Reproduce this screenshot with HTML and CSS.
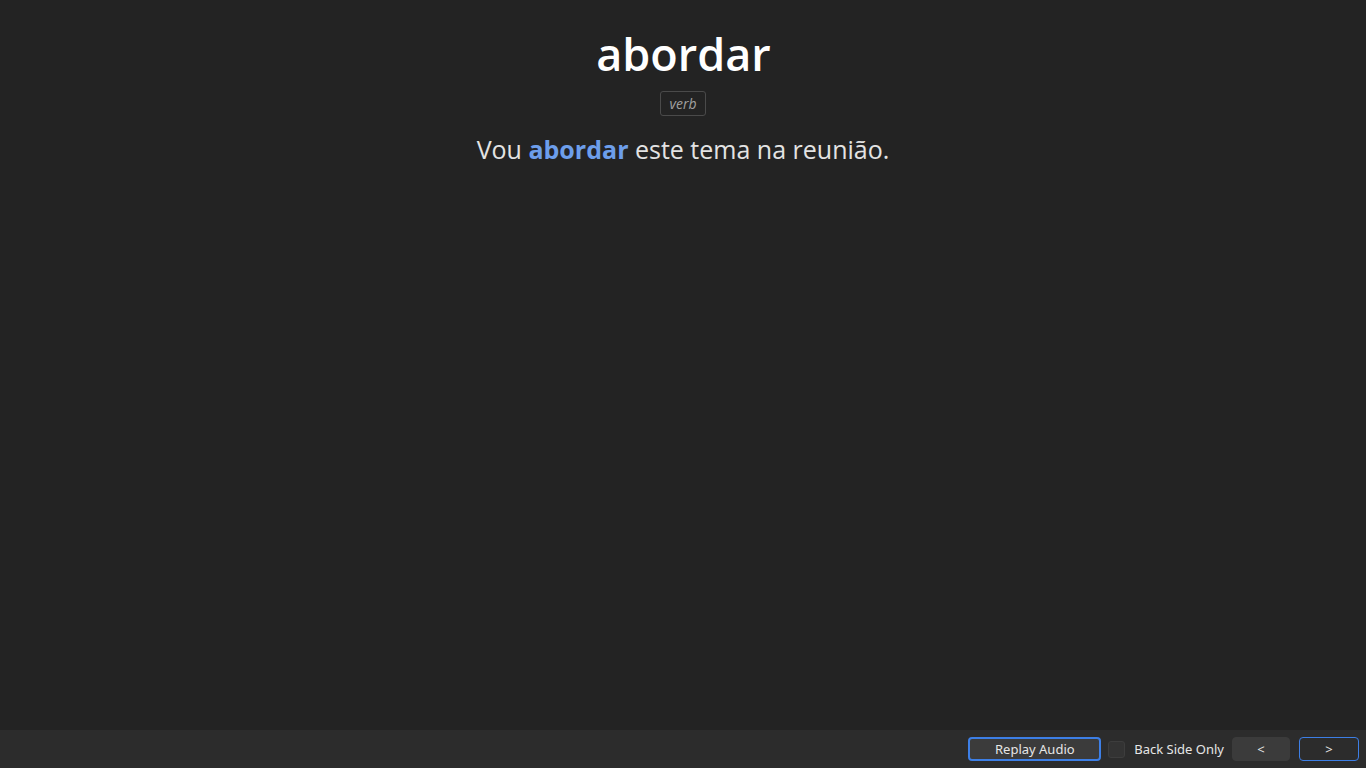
FILE: index.html
```html
<!DOCTYPE html>
<html lang="en">
<head>
    <meta charset="UTF-8">
    <title>abordar</title>
    <link rel="stylesheet" href="styles.css">
</head>
<body>

<div class="card">
    <div class="word">abordar</div>
    <div class="pos">verb</div>
    <div class="sentence">Vou <b class="hl">abordar</b> este tema na reunião.</div>
</div>

<!-- Bottom toolbar -->
<div class="bottom-bar">
    <button class="btn focused">Replay Audio</button>
    <label class="check">
        <span class="box"></span>
        Back Side Only
    </label>
    <button class="btn nav">&lt;</button>
    <button class="btn nav outline">&gt;</button>
</div>

</body>
</html>
```

FILE: styles.css
```css
html, body {
    height: 100%;
}
body {
    margin: 0;
    padding: 0;
    background: #232323;
    color: #eee;
    font-family: "Open Sans", "Noto Sans", sans-serif;
    display: flex;
    flex-direction: column;
    overflow: hidden;
}
.card {
    flex: 1;
    display: flex;
    flex-direction: column;
    align-items: center;
    padding-top: 22px;
}
.word {
    font-size: 45px;
    font-weight: 600;
    color: #fff;
    line-height: 63px;
    padding-left: 1px;
}
.pos {
    margin-top: 6px;
    font-size: 14px;
    font-style: italic;
    color: #a0a0a0;
    border: 1px solid #4a4a4a;
    border-radius: 3px;
    padding: 0 8px;
    line-height: 23px;
}
.sentence {
    margin-top: 16px;
    font-size: 25px;
    color: #e3e3e3;
    line-height: 34px;
}
.hl {
    color: #6d9eeb;
}
.bottom-bar {
    height: 38px;
    background: #2c2c2c;
    display: flex;
    justify-content: flex-end;
    align-items: center;
    padding-right: 7px;
    gap: 8px;
}
.btn {
    font-family: "Noto Sans", "Open Sans", sans-serif;
    font-size: 13px;
    color: #e6e6e6;
    background: #3b3b3b;
    border: 1px solid #3b3b3b;
    border-radius: 4px;
    height: 24px;
    padding: 0;
    width: 133px;
}
.btn.focused {
    border: 2px solid #3d7fe6;
    margin-right: -1px;
}
.btn.nav {
    width: 58px;
}
.btn.outline {
    width: 60px;
    background: #2c2c2c;
    border: 1px solid #3d7fe6;
    margin-left: 1px;
}
.check {
    display: flex;
    align-items: center;
    gap: 9px;
    font-family: "Noto Sans", "Open Sans", sans-serif;
    font-size: 13px;
    color: #e6e6e6;
}
.box {
    width: 15px;
    height: 15px;
    background: #333;
    border: 1px solid #3d3d3d;
    border-radius: 3px;
}
```
